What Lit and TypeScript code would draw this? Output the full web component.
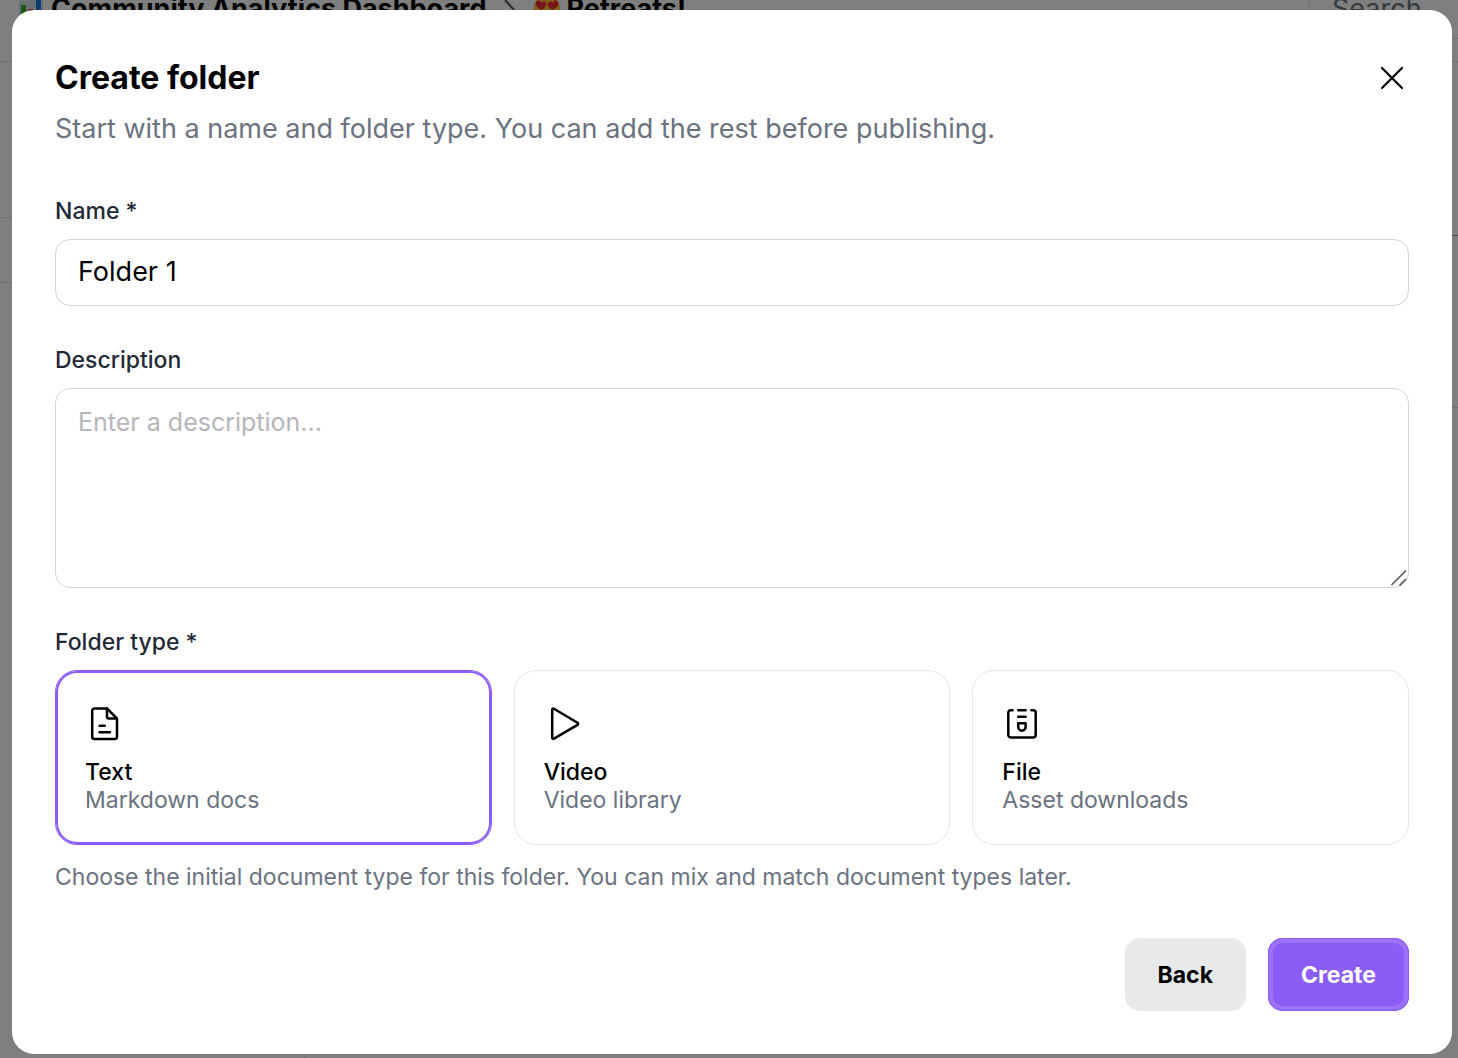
import { LitElement, html, css, svg } from "lit";
import { customElement, state } from "lit/decorators.js";
import { classMap } from "lit/directives/class-map.js";

type FolderType = "text" | "video" | "file";

const glyphs = {
  text: svg`
    <path d="M22 4.4H9.500a2.300 2.300 0 0 0-2.300 2.300v26a2.300 2.300 0 0 0 2.300 2.300h20.200a2.300 2.300 0 0 0 2.300-2.300V14.600L22 4.400z" />
    <path d="M22 4.800v8a1.800 1.800 0 0 0 1.800 1.800h7.800" />
    <path d="M14.600 21.700h5.200M14.600 28.200h10.400" />`,
  video: svg`
    <path d="M8.200 5.700v28a1.200 1.200 0 0 0 1.800 1L33.500 20.800a1.200 1.200 0 0 0 0-2.100L10 4.700a1.200 1.200 0 0 0-1.800 1z" />`,
  file: svg`
    <path d="M10.600 6.300H8.600a2.300 2.300 0 0 0-2.300 2.300v22.500a2.300 2.300 0 0 0 2.300 2.300h22.800a2.300 2.300 0 0 0 2.300-2.300V8.600a2.300 2.300 0 0 0-2.300-2.300h-2" />
    <path d="M16.200 6.300h7.400M16.200 12.700h7.400M16.200 19.300h7.400v3.700a3.700 3.700 0 0 1-7.400 0z" />`,
};

const folderTypes: { id: FolderType; name: string; note: string }[] = [
  { id: "text", name: "Text", note: "Markdown docs" },
  { id: "video", name: "Video", note: "Video library" },
  { id: "file", name: "File", note: "Asset downloads" },
];

/* The page that lies dimmed behind the dialog. */
@customElement("workspace-page")
export class WorkspacePage extends LitElement {
  static styles = css`
    :host {
      display: flex;
      flex-direction: column;
      height: 100%;
      overflow: hidden;
      background: #fff;
      color: #000;
      font-family: Inter, sans-serif;
    }
    .bar {
      display: flex;
      align-items: center;
      flex: none;
      height: 96px;
      margin-top: -40px;
      padding-bottom: 5px;
      border-bottom: 1px solid #e0e0e0;
      box-sizing: content-box;
    }
    .crumbs {
      display: flex;
      align-items: center;
      flex: 1;
      padding-left: 19px;
      font-size: 27px;
      font-weight: 700;
      white-space: nowrap;
    }
    .crumbs svg {
      flex: none;
    }
    .chart {
      margin-right: 8px;
    }
    .chevron {
      margin: 0 18px;
    }
    .love {
      margin-right: 6px;
    }
    .search {
      display: flex;
      align-items: center;
      width: 126px;
      height: 60px;
      padding-left: 22px;
      border: 1px solid #e0e0e0;
      border-right: 0;
      color: #6b7280;
      font-size: 27px;
    }
    .body {
      display: grid;
      grid-template-columns: 306px 1fr 306px;
      flex: 1;
    }
    .side {
      border-right: 1px solid #e0e0e0;
    }
    .row {
      height: 155px;
      border-bottom: 1px solid #e0e0e0;
    }
    .row.short {
      height: 64px;
    }
    .detail {
      height: 173px;
      border-bottom: 1px solid #a0a0a0;
    }
    .detail.next {
      height: 171px;
      border-color: #e0e0e0;
    }
  `;

  render() {
    return html`
      <header class="bar">
        <div class="crumbs">
          <svg class="chart" width="24" height="28" viewBox="0 0 24 28" aria-hidden="true">
            <rect width="24" height="28" fill="#d5e2ea" />
            <rect x="2" y="11" width="5" height="17" fill="#28b728" />
            <rect x="9" y="15" width="5" height="13" fill="#e83a3a" />
            <rect x="17" y="1" width="5" height="27" fill="#2077e8" />
          </svg>
          <span>Community Analytics Dashboard</span>
          <svg class="chevron" width="12" height="24" viewBox="0 0 12 24" fill="none" stroke="#555" stroke-width="2" aria-hidden="true">
            <path d="M1 4l10 11L1 26" />
          </svg>
          <svg class="love" width="26" height="26" viewBox="0 0 26 26" aria-hidden="true">
            <circle cx="13" cy="13" r="13" fill="#ffbf32" />
            <path d="M7 15C2 12 0 8 3 6c2-1 4 0 4 2 1-2 4-2 5 0s-1 5-5 7zM19 15c-4-2-6-5-5-7s4-2 5 0c0-2 2-3 4-2 3 2 1 6-4 9z" fill="#ef2b35" />
            <path d="M7 17h12c-1 7-11 7-12 0z" fill="#753914" />
          </svg>
          <span>Retreats!</span>
        </div>
        <div class="search">Search</div>
      </header>
      <div class="body">
        <div class="side">
          <div class="row"></div>
          <div class="row short"></div>
        </div>
        <div></div>
        <div>
          <div class="detail"></div>
          <div class="detail next"></div>
        </div>
      </div>
    `;
  }
}

@customElement("create-folder-dialog")
export class CreateFolderDialog extends LitElement {
  @state() private selected: FolderType = "text";

  static styles = css`
    :host {
      display: block;
      font-family: Inter, sans-serif;
      color: #000;
    }
    * {
      box-sizing: border-box;
    }
    .dialog {
      padding: 44px 43px 43px;
      border-radius: 22px;
      background: #fff;
    }
    .head {
      display: flex;
      align-items: center;
      justify-content: space-between;
    }
    h2 {
      margin: 0;
      font-size: 32px;
      line-height: 48px;
      font-weight: 700;
    }
    .close {
      display: grid;
      place-items: center;
      width: 34px;
      height: 34px;
      padding: 0;
      border: 0;
      background: none;
      cursor: pointer;
    }
    .intro {
      margin: 7px 0 0;
      color: #6b7280;
      font-size: 27px;
      line-height: 40px;
    }
    form {
      display: flex;
      flex-direction: column;
      gap: 38px;
      margin-top: 46px;
    }
    .field {
      display: flex;
      flex-direction: column;
      gap: 12px;
      min-width: 0;
      margin: 0;
      padding: 0;
      border: 0;
    }
    .label {
      padding: 0;
      color: #1f2937;
      font-size: 23px;
      line-height: 32px;
      font-weight: 500;
    }
    .control {
      display: block;
      width: 100%;
      padding: 13px 22px 15px;
      border: 1px solid #d4d4d8;
      border-radius: 15px;
      outline: none;
      background: #fff;
      color: #000;
      font: 400 27px/36px Inter, sans-serif;
    }
    input.control {
      height: 67px;
    }
    .area {
      position: relative;
    }
    textarea.control {
      height: 200px;
      padding-top: 15px;
      font-size: 25px;
      resize: vertical;
    }
    textarea::placeholder {
      color: #b4b6bb;
    }
    textarea::-webkit-resizer {
      display: none;
    }
    .grip {
      position: absolute;
      right: 1px;
      bottom: 1px;
      pointer-events: none;
    }
    legend {
      margin-bottom: 12px;
    }
    .cards {
      display: grid;
      grid-template-columns: repeat(3, 1fr);
      gap: 22px;
    }
    .card {
      display: flex;
      flex-direction: column;
      padding: 33px 29px 30px;
      border: 1px solid #e5e7eb;
      border-radius: 22px;
      font-size: 23px;
      line-height: 28px;
      cursor: pointer;
    }
    .card.on {
      border-color: #8b5cf6;
      box-shadow: inset 0 0 0 2px #8b5cf6;
    }
    .card input {
      position: absolute;
      opacity: 0;
      pointer-events: none;
    }
    .card svg {
      margin-bottom: 14px;
    }
    .name {
      font-weight: 500;
    }
    .note,
    .hint {
      color: #6b7280;
    }
    .hint {
      margin: 4px 0 0;
      font-size: 23px;
      line-height: 32px;
    }
    .actions {
      display: flex;
      justify-content: flex-end;
      gap: 22px;
      margin-top: 7px;
    }
    .btn {
      height: 73px;
      padding: 0 33px;
      border: 0;
      border-radius: 15px;
      background: #e8e9eb;
      color: #000;
      font: 700 23px/32px Inter, sans-serif;
      cursor: pointer;
    }
    .btn.primary {
      background: #8b5cf6;
      box-shadow: inset 0 0 0 1px #8b5cf6, inset 0 0 0 5px #9b72f8;
      color: #fff;
    }
  `;

  render() {
    return html`
      <section class="dialog" role="dialog" aria-modal="true" aria-labelledby="title">
        <div class="head">
          <h2 id="title">Create folder</h2>
          <button class="close" type="button" aria-label="Close">
            <svg width="24" height="24" viewBox="0 0 24 24" fill="none" stroke="#000" stroke-width="2.200" stroke-linecap="round">
              <path d="M2 2l20 20M22 2L2 22" />
            </svg>
          </button>
        </div>
        <p class="intro">Start with a name and folder type. You can add the rest before publishing.</p>
        <form @submit=${(e: Event) => e.preventDefault()}>
          <div class="field">
            <label class="label" for="name">Name *</label>
            <input class="control" id="name" type="text" .value=${"Folder 1"} required />
          </div>
          <div class="field">
            <label class="label" for="description">Description</label>
            <div class="area">
              <textarea class="control" id="description" placeholder="Enter a description..."></textarea>
              <svg class="grip" width="18" height="18" viewBox="0 0 18 18" fill="none" stroke="#5a5a5a" stroke-width="1.700" aria-hidden="true">
                <path d="M1.500 16L16 1.500M9.500 16.500L16 10" />
              </svg>
            </div>
          </div>
          <fieldset class="field">
            <legend class="label">Folder type *</legend>
            <div class="cards">
              ${folderTypes.map(
                (t) => html`
                  <label class=${classMap({ card: true, on: this.selected === t.id })}>
                    <input
                      type="radio"
                      name="folder-type"
                      value=${t.id}
                      .checked=${this.selected === t.id}
                      @change=${() => (this.selected = t.id)}
                    />
                    <svg width="40" height="40" viewBox="0 0 40 40" fill="none" stroke="#000" stroke-width="2.500" stroke-linecap="round" stroke-linejoin="round" aria-hidden="true">
                      ${glyphs[t.id]}
                    </svg>
                    <span class="name">${t.name}</span>
                    <span class="note">${t.note}</span>
                  </label>
                `
              )}
            </div>
            <p class="hint">Choose the initial document type for this folder. You can mix and match document types later.</p>
          </fieldset>
          <div class="actions">
            <button class="btn" type="button">Back</button>
            <button class="btn primary" type="submit">Create</button>
          </div>
        </form>
      </section>
    `;
  }
}

@customElement("app-root")
export class AppRoot extends LitElement {
  static styles = css`
    :host {
      display: block;
      position: relative;
      min-height: 100vh;
    }
    .behind {
      position: absolute;
      inset: 0;
    }
    .backdrop {
      position: relative;
      box-sizing: border-box;
      min-height: 100vh;
      padding: 10px 6px 4px 12px;
      background: rgba(0, 0, 0, 0.5);
    }
  `;

  render() {
    return html`
      <workspace-page class="behind"></workspace-page>
      <div class="backdrop">
        <create-folder-dialog></create-folder-dialog>
      </div>
    `;
  }
}
